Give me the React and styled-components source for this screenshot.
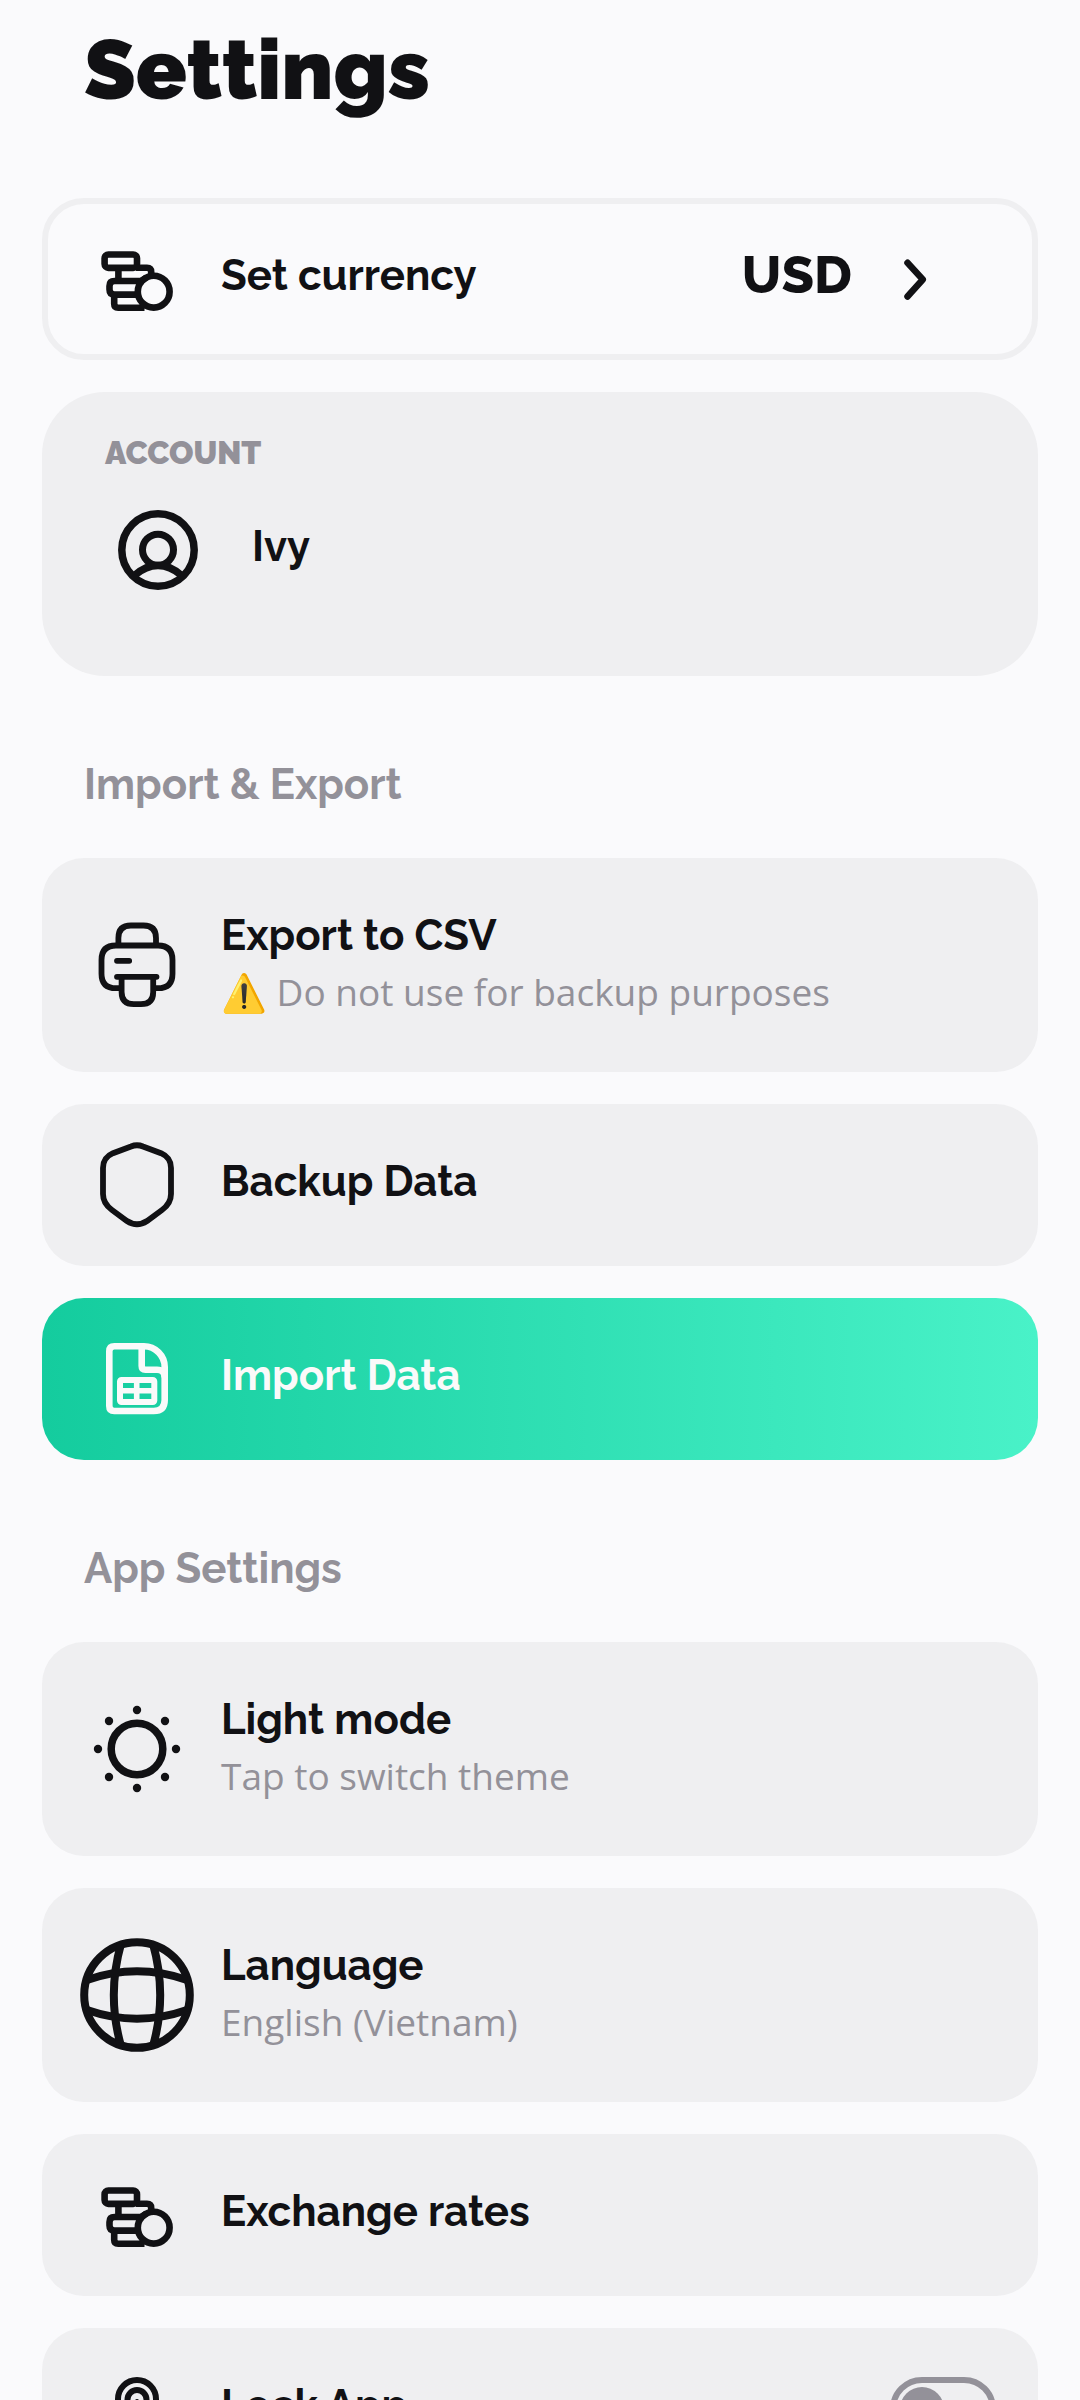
import React from "react";
import styled, { createGlobalStyle, css } from "styled-components";

const color = {
  bg: "#FAFAFC",
  card: "#EFEFF1",
  ink: "#111114",
  gray: "#939199",
};

const GlobalStyle = createGlobalStyle`
  *, *::before, *::after { box-sizing: border-box; }
  body {
    margin: 0;
    background: ${color.bg};
    color: ${color.ink};
    font-family: Raleway, Lato, "Open Sans", sans-serif;
    font-feature-settings: normal;
  }
`;

const Screen = styled.main`
  height: 100vh;
  overflow-y: auto;
  scrollbar-width: none;
  padding: 21px 42px 32px;
`;

const PageTitle = styled.h1`
  margin: 0;
  padding: 0 42px 79px;
  font-size: 84px;
  line-height: 98px;
  font-weight: 900;
`;

const Stack = styled.div`
  display: flex;
  flex-direction: column;
  gap: 32px;
`;

const SectionTitle = styled.h2`
  margin: 0;
  padding: 84px 42px 49px;
  color: ${color.gray};
  font-size: 42px;
  line-height: 49px;
  font-weight: 700;
`;

const rowStyles = css`
  display: flex;
  align-items: center;
  gap: 21px;
  width: 100%;
  min-height: ${(p) => (p.$tall ? 214 : 162)}px;
  margin: 0;
  padding: 18px 42px 18px 32px;
  border: 0;
  border-radius: 42px;
  background: ${color.card};
  color: ${color.ink};
  font-family: inherit;
  text-align: left;
  cursor: pointer;
`;

const Row = styled.button`
  ${rowStyles}
`;

const OutlinedRow = styled(Row)`
  padding: 12px 36px 12px 26px;
  border: 6px solid ${color.card};
  background: transparent;
`;

const PrimaryRow = styled(Row)`
  background: linear-gradient(90deg, #14cc9e, #49f2c8);
  color: #fafafa;
`;

const SwitchRow = styled.label`
  ${rowStyles}
`;

const RowText = styled.span`
  display: flex;
  flex: 1;
  flex-direction: column;
  min-width: 0;
`;

const RowTitle = styled.span`
  padding-bottom: 8px;
  font-size: 42px;
  line-height: 49px;
  font-weight: 700;
`;

const RowNote = styled.span`
  padding-bottom: 4px;
  color: ${color.gray};
  font-family: "Open Sans", "Noto Sans", sans-serif;
  font-size: 37px;
  line-height: 48px;
`;

const RowValue = styled.span`
  display: flex;
  align-items: center;
  gap: 32px;
  padding-right: 49px;
`;

const CurrencyCode = styled.span`
  padding-bottom: 10px;
  font-size: 53px;
  line-height: 62px;
  font-weight: 800;
`;

const AccountCard = styled.section`
  padding: 42px 63px 63px;
  border-radius: 63px;
  background: ${color.card};
`;

const AccountLabel = styled.h2`
  margin: 0;
  color: ${color.gray};
  font-size: 32px;
  line-height: 38px;
  font-weight: 900;
`;

const AccountButton = styled.button`
  display: flex;
  align-items: center;
  gap: 52px;
  width: 100%;
  height: 126px;
  margin: 15px 0 0;
  padding: 0 11px;
  border: 0;
  background: none;
  color: inherit;
  font-family: inherit;
  text-align: left;
  cursor: pointer;
`;

const Switch = styled.input`
  appearance: none;
  display: flex;
  align-items: center;
  flex: none;
  width: 106px;
  height: 64px;
  margin: 0;
  padding: 0 4px;
  border: 6px solid ${color.gray};
  border-radius: 32px;
  cursor: pointer;

  &::before {
    content: "";
    width: 44px;
    height: 44px;
    border-radius: 50%;
    background: ${color.gray};
  }

  &:checked {
    justify-content: flex-end;
  }
`;

const Svg = styled.svg`
  flex: none;
  width: ${(p) => p.$size}px;
  height: ${(p) => p.$size}px;
  fill: none;
  stroke: currentColor;
`;

const Icon = ({ size = 126, stroke = 6, children }) => (
  <Svg $size={size} viewBox={`0 0 ${size} ${size}`} strokeWidth={stroke} aria-hidden="true">
    {children}
  </Svg>
);

const CoinsIcon = () => (
  <Icon stroke={6.6}>
    <rect x="30.6" y="38.5" width="32.4" height="13.4" rx="3.8" />
    <path d="M62 51.7H73q4.2 0 4.2 4.2V60" />
    <path d="M44.4 52V65" />
    <path d="M70 65H40.5q-5 0-5 5v3.6q0 5 5 5H62.5" />
    <path d="M40.2 78V87.700q0 4 4 4H70.500" />
    <path d="M72.500 61.500L66 66" />
    <path d="M66 88L71 91.600" />
    <circle cx="79.700" cy="75.700" r="15.900" />
  </Icon>
);

const ChevronIcon = () => (
  <Icon size={63} stroke={6.5}>
    <path d="M23.500 14.800L38.800 31.500L23.500 48.500" strokeLinecap="round" strokeLinejoin="round" />
  </Icon>
);

const UserIcon = () => (
  <Icon size={84} stroke={7.5}>
    <circle cx="42" cy="42" r="36.200" />
    <circle cx="42" cy="41.800" r="15.500" strokeWidth="7" />
    <path d="M19 67Q30 57.500 42 57.500T65 67" />
  </Icon>
);

const PrinterIcon = () => (
  <Icon stroke={5.8}>
    <path d="M44.400 43.500V36q0-12.500 12.500-12.500H69.500q12.500 0 12.500 12.500V43.500" />
    <path d="M47.500 86.200H42q-14.500 0-14.500-14.500V58q0-14.500 14.500-14.500H84q14.500 0 14.500 14.500V71.700q0 14.500-14.500 14.500H79" />
    <path d="M43 58.800H55.200M43 74.800H82.500" strokeLinecap="round" />
    <path d="M47.600 75V90q0 12.200 12.200 12.200H67q12.200 0 12.200-12.200V75" />
  </Icon>
);

const ShieldIcon = () => (
  <Icon stroke={5.8}>
    <path d="M57 24.500Q63 22 69 24.500L87 31.200Q97 35.500 97 46V72Q97 81.500 88 88L73 99Q63 105.500 53 99L38 88Q29 81.500 29 72V46Q29 35.500 39 31.200Z" />
  </Icon>
);

const SheetIcon = () => (
  <Icon stroke={6.6}>
    <path d="M40.300 30.300H70q8.500 0 14.600 6.100T90.700 51V84q0 11-11 11H40.300q-5 0-5-5V35.300q0-5 5-5Z" />
    <path d="M67.700 30V50q0 3.700 3.700 3.700H83q7.700 0 7.700 7.700" />
    <rect x="46" y="64" width="34.300" height="22" rx="1.500" strokeWidth="6" />
    <path d="M62.700 64V86M46 74.700H80" strokeWidth="5.600" />
  </Icon>
);

const SUN_RAYS = [
  [63, 24], [63, 102], [24, 63], [102, 63],
  [35, 35], [91, 35], [35, 91], [91, 91],
];

const SunIcon = () => (
  <Icon stroke={7.5}>
    <circle cx="63" cy="63" r="25.800" />
    {SUN_RAYS.map(([x, y]) => (
      <circle key={`${x}-${y}`} cx={x} cy={y} r="4.200" fill="currentColor" stroke="none" />
    ))}
  </Icon>
);

const GlobeIcon = () => (
  <Icon stroke={8}>
    <circle cx="63" cy="63" r="52.800" />
    <path d="M47 12Q32.600 63 47 114M79 12Q93.400 63 79 114" />
    <path d="M13 48Q63 30.600 113 48M13 78Q63 95.400 113 78" />
  </Icon>
);

const LockIcon = () => (
  <Icon stroke={6}>
    <path d="M44 53a19 19 0 0 1 38 0V78a19 19 0 0 1-38 0Z" />
    <circle cx="63" cy="53.500" r="9.500" />
    <circle cx="63" cy="55" r="2" fill="currentColor" stroke="none" />
  </Icon>
);

function SettingsRow({ as: Kind = Row, icon, title, note, children }) {
  return (
    <Kind type={Kind === SwitchRow ? undefined : "button"} $tall={Boolean(note)}>
      {icon}
      <RowText>
        <RowTitle>{title}</RowTitle>
        {note && <RowNote>{note}</RowNote>}
      </RowText>
      {children}
    </Kind>
  );
}

export default function App() {
  return (
    <>
      <GlobalStyle />
      <Screen>
        <PageTitle>Settings</PageTitle>

        <Stack>
          <SettingsRow as={OutlinedRow} icon={<CoinsIcon />} title="Set currency">
            <RowValue>
              <CurrencyCode>USD</CurrencyCode>
              <ChevronIcon />
            </RowValue>
          </SettingsRow>
          <AccountCard>
            <AccountLabel>ACCOUNT</AccountLabel>
            <AccountButton type="button">
              <UserIcon />
              <RowTitle>Ivy</RowTitle>
            </AccountButton>
          </AccountCard>
        </Stack>

        <SectionTitle>Import &amp; Export</SectionTitle>
        <Stack>
          <SettingsRow
            icon={<PrinterIcon />}
            title="Export to CSV"
            note="⚠️ Do not use for backup purposes"
          />
          <SettingsRow icon={<ShieldIcon />} title="Backup Data" />
          <SettingsRow as={PrimaryRow} icon={<SheetIcon />} title="Import Data" />
        </Stack>

        <SectionTitle>App Settings</SectionTitle>
        <Stack>
          <SettingsRow icon={<SunIcon />} title="Light mode" note="Tap to switch theme" />
          <SettingsRow icon={<GlobeIcon />} title="Language" note="English (Vietnam)" />
          <SettingsRow icon={<CoinsIcon />} title="Exchange rates" />
          <SettingsRow as={SwitchRow} icon={<LockIcon />} title="Lock App">
            <Switch type="checkbox" />
          </SettingsRow>
        </Stack>
      </Screen>
    </>
  );
}
